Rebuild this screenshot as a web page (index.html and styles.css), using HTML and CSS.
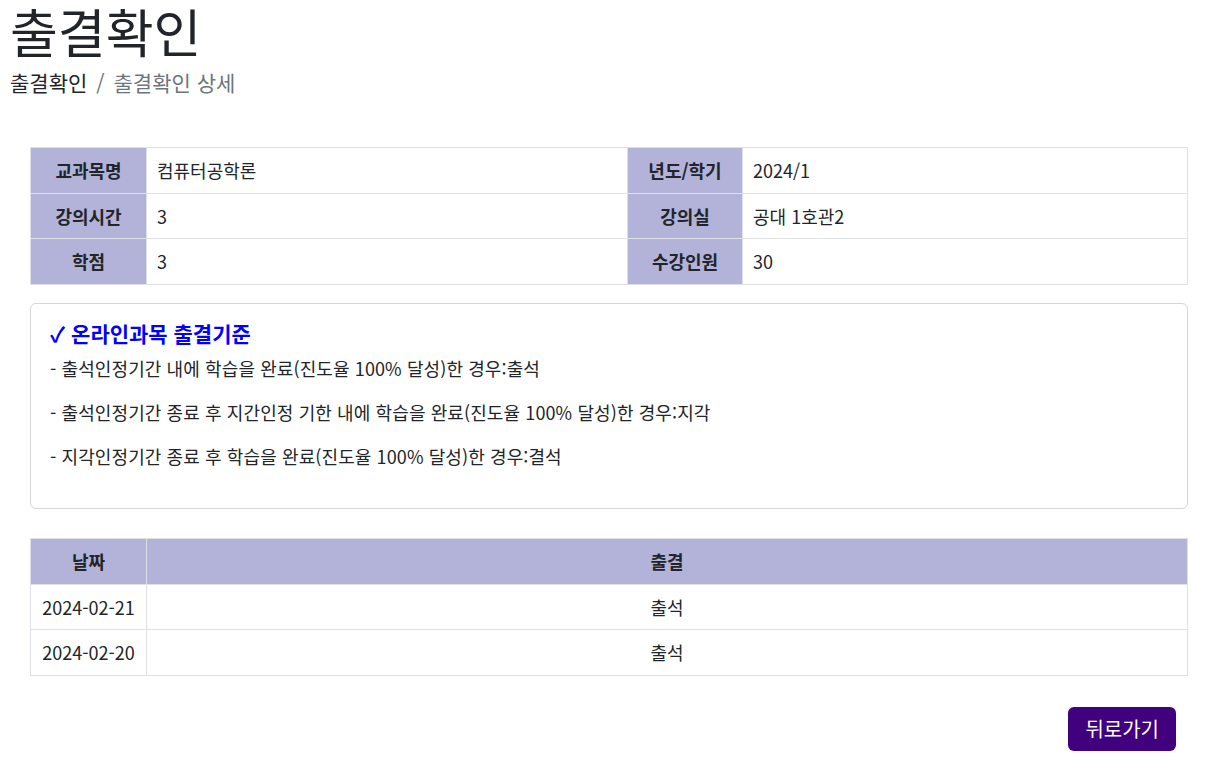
FILE: index.html
```html
<!DOCTYPE html>
<html lang="ko">
<head>
<meta charset="utf-8">
<title>출결확인</title>
<link rel="stylesheet" href="styles.css">
</head>
<body>
<div class="page">
  <h1 class="title">출결확인</h1>
  <nav class="crumbs">
    <span class="crumb">출결확인</span>
    <span class="sep">/</span>
    <span class="crumb current">출결확인 상세</span>
  </nav>

  <div class="content">
    <table class="grid info-table">
      <colgroup>
        <col class="c-label"><col class="c-val1"><col class="c-label2"><col>
      </colgroup>
      <tr>
        <th>교과목명</th><td>컴퓨터공학론</td>
        <th>년도/학기</th><td>2024/1</td>
      </tr>
      <tr>
        <th>강의시간</th><td>3</td>
        <th>강의실</th><td>공대 1호관2</td>
      </tr>
      <tr>
        <th>학점</th><td>3</td>
        <th>수강인원</th><td>30</td>
      </tr>
    </table>

    <div class="notice">
      <h3 class="notice-title">✓ 온라인과목 출결기준</h3>
      <p>- 출석인정기간 내에 학습을 완료(진도율 100% 달성)한 경우:출석</p>
      <p>- 출석인정기간 종료 후 지간인정 기한 내에 학습을 완료(진도율 100% 달성)한 경우:지각</p>
      <p>- 지각인정기간 종료 후 학습을 완료(진도율 100% 달성)한 경우:결석</p>
    </div>

    <table class="grid att-table">
      <colgroup>
        <col class="c-label"><col>
      </colgroup>
      <tr><th>날짜</th><th>출결</th></tr>
      <tr><td class="center">2024-02-21</td><td class="center">출석</td></tr>
      <tr><td class="center">2024-02-20</td><td class="center">출석</td></tr>
    </table>

    <div class="actions">
      <button class="btn-back" type="button">뒤로가기</button>
    </div>
  </div>
</div>
</body>
</html>
```

FILE: styles.css
```css
* { box-sizing: border-box; }
html, body { margin: 0; padding: 0; background: #fff; }
body {
  font-family: "Noto Sans CJK KR", "Noto Sans", sans-serif;
  color: #212529;
  font-size: 18px;
  line-height: 1.5;
}
.page { padding: 0 10px; }
.title {
  margin: 0;
  font-size: 52px;
  font-weight: 400;
  line-height: 62px;
}
.crumbs {
  display: flex;
  gap: 9px;
  font-size: 21px;
  line-height: 28px;
  margin-top: 6px;
}
.crumb.current, .sep { color: #6c757d; }
.content { padding: 51px 13px 0 20px; }
.grid {
  width: 100%;
  border-collapse: collapse;
  table-layout: fixed;
  font-size: 18px;
}
.grid th, .grid td {
  border: 1px solid #dee2e6;
  height: 45.7px;
  padding: 0 10px;
  vertical-align: middle;
}
.grid th {
  background: #b3b3d9;
  font-weight: 700;
  text-align: center;
}
.c-label { width: 116px; }
.c-val1 { width: 481px; }
.c-label2 { width: 115px; }
.center { text-align: center; }
.notice {
  margin-top: 18px;
  border: 1px solid #d6d6d6;
  border-radius: 6px;
  padding: 14px 19px 20px;
}
.notice-title {
  margin: 0 0 8px;
  font-size: 21px;
  line-height: 30px;
  color: #0000ff;
  font-weight: 700;
}
.notice p {
  margin: 0 0 20px;
  line-height: 24px;
  letter-spacing: 0.1px;
}
.att-table { margin-top: 29px; }
.actions {
  display: flex;
  justify-content: flex-end;
  padding: 31px 12px 0 0;
}
.btn-back {
  font-family: inherit;
  font-size: 20px;
  line-height: 28px;
  padding: 8px 17px;
  color: #fff;
  background: #41007d;
  border: 0;
  border-radius: 6px;
}
```
